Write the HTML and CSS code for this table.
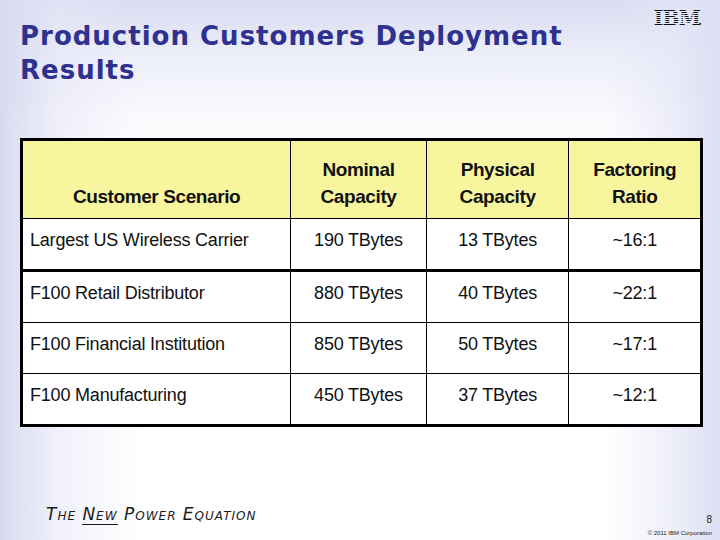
FILE: index.html
```html
<!DOCTYPE html>
<html lang="en">
<head>
<meta charset="utf-8">
<title>Production Customers Deployment Results</title>
<link rel="stylesheet" href="styles.css">
</head>
<body>
<div class="slide">
  <header class="top">
    <h1 class="title">Production Customers Deployment<br>Results</h1>
    <svg class="ibm" width="52" height="26" viewBox="0 0 52 26" aria-label="IBM">
      <text x="24" y="21" text-anchor="middle" class="ibm-text">IBM</text>
      <g class="ibm-gaps">
        <rect x="0" y="7" width="47" height="1"/>
        <rect x="0" y="9" width="47" height="1"/>
        <rect x="0" y="11" width="47" height="1"/>
        <rect x="0" y="13" width="47" height="1"/>
        <rect x="0" y="15" width="47" height="1"/>
        <rect x="0" y="17" width="47" height="1"/>
        <rect x="0" y="19" width="47" height="1"/>
      </g>
      <rect x="46.5" y="19" width="1.6" height="1.6" fill="#111"/>
    </svg>
  </header>

  <main class="content">
    <table class="results">
      <colgroup>
        <col class="c1"><col class="c2"><col class="c3"><col class="c4">
      </colgroup>
      <thead>
        <tr>
          <th class="first">Customer Scenario</th>
          <th>Nominal<br>Capacity</th>
          <th>Physical<br>Capacity</th>
          <th>Factoring<br>Ratio</th>
        </tr>
      </thead>
      <tbody>
        <tr class="r1">
          <td class="first">Largest US Wireless Carrier</td>
          <td>190 TBytes</td>
          <td>13 TBytes</td>
          <td>~16:1</td>
        </tr>
        <tr>
          <td class="first">F100 Retail Distributor</td>
          <td>880 TBytes</td>
          <td>40 TBytes</td>
          <td>~22:1</td>
        </tr>
        <tr>
          <td class="first">F100 Financial Institution</td>
          <td>850 TBytes</td>
          <td>50 TBytes</td>
          <td>~17:1</td>
        </tr>
        <tr>
          <td class="first">F100 Manufacturing</td>
          <td>450 TBytes</td>
          <td>37 TBytes</td>
          <td>~12:1</td>
        </tr>
      </tbody>
    </table>
  </main>

  <footer class="bottom">
    <div class="tagline">The <span class="new">New</span> Power Equation</div>
    <div class="meta">
      <div class="page">8</div>
      <div class="copy">© 2011 IBM Corporation</div>
    </div>
  </footer>
</div>
</body>
</html>
```

FILE: styles.css
```css
html, body {
  margin: 0;
  padding: 0;
}

body {
  width: 720px;
  height: 540px;
  overflow: hidden;
}

.slide {
  width: 720px;
  height: 540px;
  display: flex;
  flex-direction: column;
  box-sizing: border-box;
  background:
    linear-gradient(90deg, rgba(216,218,240,1) 0%, rgba(230,231,247,0.6) 8%, rgba(255,255,255,0) 20%, rgba(255,255,255,0) 84%, rgba(228,230,247,0.7) 94%, rgba(220,222,243,1) 100%),
    linear-gradient(180deg, #d9dbf1 0%, #eceef9 10%, #fbfbfe 22%, #ffffff 40%, #ffffff 100%);
  background-color: #ffffff;
}

.top {
  display: flex;
  justify-content: space-between;
  align-items: flex-start;
  padding: 19px 15px 0 20px;
}

.title {
  margin: 0;
  font-family: "DejaVu Sans", Verdana, sans-serif;
  font-weight: bold;
  font-size: 26px;
  line-height: 34px;
  color: #2e3190;
  letter-spacing: 1px;
}

.ibm {
  margin-top: -15px;
}

.ibm-text {
  font-family: "DejaVu Serif", serif;
  font-weight: bold;
  font-size: 20px;
  letter-spacing: -0.6px;
  fill: #111;
}

.ibm-gaps rect {
  fill: #e4e6f6;
}

.content {
  padding: 51px 0 0 20px;
}

.results {
  border-collapse: collapse;
  table-layout: fixed;
  width: 683px;
  border: 3px solid #000;
  font-family: "Liberation Sans", Arial, sans-serif;
  color: #111;
}

.c1 { width: 268px; }
.c2 { width: 135px; }
.c3 { width: 142px; }
.c4 { width: 132px; }

.results th,
.results td {
  border: 1px solid #000;
  padding: 0;
  text-align: center;
}

.results th {
  background: #f8f59f;
  font-size: 19px;
  font-weight: bold;
  line-height: 27px;
  letter-spacing: -0.4px;
  height: 69px;
  vertical-align: bottom;
  padding-bottom: 8px;
}

.results td {
  background: #fff;
  font-size: 18px;
  line-height: 22px;
  height: 40px;
  vertical-align: top;
  padding-top: 10px;
  letter-spacing: -0.2px;
}

.results .first {
  text-align: left;
  padding-left: 7px;
}

.results th.first {
  text-align: center;
  padding-left: 0;
}

.results tr.r1 td {
  border-bottom-width: 3px;
}

.bottom {
  margin-top: auto;
  display: flex;
  justify-content: space-between;
  align-items: flex-end;
  padding: 0 8px 3px 46px;
}

.tagline {
  font-family: "DejaVu Sans", sans-serif;
  font-style: italic;
  font-weight: 200;
  font-variant: small-caps;
  font-size: 17px;
  letter-spacing: 1px;
  color: #1a1a1a;
  margin-bottom: 13px;
}

.new {
  border-bottom: 1px solid #1a1a1a;
}

.meta {
  display: flex;
  flex-direction: column;
  align-items: flex-end;
}

.page {
  font-family: "Liberation Sans", Arial, sans-serif;
  font-size: 10px;
  line-height: 12px;
  color: #222;
  margin-bottom: 3px;
}

.copy {
  font-family: "Liberation Sans", Arial, sans-serif;
  font-size: 6px;
  line-height: 8px;
  color: #222;
}
```
